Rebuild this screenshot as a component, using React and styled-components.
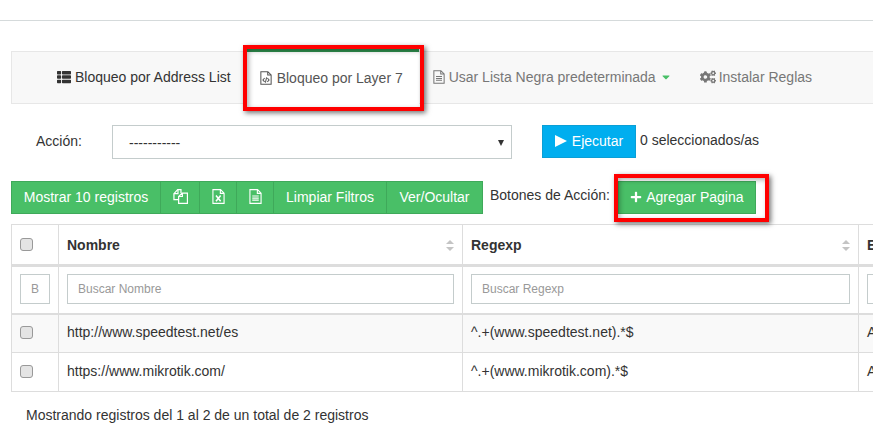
import React from "react";
import styled, { createGlobalStyle } from "styled-components";
import { FaThList, FaCogs, FaPlus, FaCaretDown } from "react-icons/fa";

const GlobalStyle = createGlobalStyle`
  html, body {
    margin: 0;
    padding: 0;
    background: #fff;
    overflow: hidden;
  }
  body {
    width: 873px;
    height: 433px;
    font-family: "Liberation Sans", Arial, sans-serif;
    font-size: 14px;
    color: #333;
  }
  * { box-sizing: border-box; }
`;

const Page = styled.div`
  width: 873px;
  height: 433px;
  overflow: hidden;
  padding-top: 20px;
`;

const TopRule = styled.div`
  height: 1px;
  background: #d5dadb;
  margin-bottom: 30px;
`;

const Content = styled.div`
  padding-left: 11px;
`;

const Nav = styled.div`
  width: 900px;
  height: 53px;
  display: flex;
  align-items: stretch;
  background: #f8f8f8;
  border: 1px solid #e7e7e7;
  padding-left: 45px;
`;

const Tab = styled.div`
  position: relative;
  display: flex;
  align-items: center;
  gap: ${(p) => p.$iconGap || 4}px;
  padding-bottom: 2px;
  color: ${(p) => p.$color || "#777"};
  margin-right: ${(p) => p.$gap || 0}px;
  & > svg { flex: none; }
`;

const ActiveTab = styled(Tab)`
  width: 173px;
  margin: -3px 14px -1px 15px;
  padding-left: 14px;
  padding-bottom: 0;
  background: #fff;
  border-top: 3px solid #2f8f4e;
  color: #555;
  gap: 5px;
`;

const RedBox = styled.div`
  position: absolute;
  border: 4px solid #f00;
  box-shadow: 2px 2px 5px rgba(0, 0, 0, 0.55), inset 2px 2px 5px rgba(0, 0, 0, 0.3);
  pointer-events: none;
  top: ${(p) => p.$top}px;
  left: ${(p) => p.$left}px;
  width: ${(p) => p.$width}px;
  height: ${(p) => p.$height}px;
`;

const Caret = styled(FaCaretDown)`
  color: #49bf67;
`;

const ActionRow = styled.div`
  display: flex;
  align-items: flex-start;
  margin-top: 21px;
  height: 34px;
`;

const ActionLabel = styled.label`
  width: 101px;
  padding: 8px 0 0 25px;
  color: #333;
`;

const SelectBox = styled.div`
  width: 400px;
  height: 34px;
  border: 1px solid #c4cccc;
  background: #fff;
  display: flex;
  align-items: center;
  justify-content: space-between;
  padding: 2px 7px 0 16px;
  color: #333;
  &::after {
    content: "";
    border-left: 3px solid transparent;
    border-right: 3px solid transparent;
    border-top: 6px solid #333;
  }
`;

const RunButton = styled.button`
  margin-left: 30px;
  width: 94px;
  height: 33px;
  display: flex;
  align-items: center;
  justify-content: center;
  gap: 5px;
  background: #00aeef;
  border: 1px solid #0a9fd6;
  color: #fff;
  font: inherit;
  padding: 0 0 2px;
`;

const Selected = styled.span`
  margin: 7px 0 0 4px;
`;

const ButtonRow = styled.div`
  display: flex;
  align-items: flex-start;
  margin-top: 22px;
  height: 33px;
`;

const ButtonGroup = styled.div`
  display: flex;
`;

const GreenButton = styled.button`
  height: 33px;
  width: ${(p) => p.$width}px;
  margin-left: -1px;
  display: flex;
  align-items: center;
  justify-content: center;
  gap: 4px;
  background: #49bf67;
  border: 1px solid #3fa95a;
  color: #fff;
  font: inherit;
  padding: 0 0 2px;
  &:first-child { margin-left: 0; }
`;

const ActionsLabel = styled.span`
  margin: 6px 8px 0 7px;
  white-space: nowrap;
`;

const AddWrap = styled.div`
  position: relative;
`;

const Table = styled.table`
  table-layout: fixed;
  width: 900px;
  margin-top: 10px;
  border-collapse: collapse;
  border: 1px solid #ddd;
  & td, & th {
    border: 1px solid #ddd;
    padding: 0 8px;
    text-align: left;
    white-space: nowrap;
    overflow: hidden;
  }
`;

const HeadRow = styled.tr`
  height: 41px;
  & > th { border-bottom: 3px solid #ddd; position: relative; }
`;

const FilterRow = styled.tr`
  height: 48px;
  & > td { border-bottom: 2px solid #ddd; }
`;

const DataRow = styled.tr`
  height: 39px;
  background: ${(p) => (p.$odd ? "#f9f9f9" : "#fff")};
  & > td { padding-bottom: 2px; }
`;

const Check = styled.span`
  display: block;
  width: 13px;
  height: 13px;
  border: 1px solid #999;
  border-radius: 3px;
  background: #e4e4e4;
`;

const SortSvg = styled.svg`
  position: absolute;
  right: 8px;
  top: 15px;
  color: #c4c4c4;
`;

const FilterInput = styled.div`
  height: 30px;
  width: ${(p) => p.$width || "100%"};
  border: 1px solid #c4cccc;
  margin-bottom: 1px;
  display: flex;
  align-items: center;
  justify-content: ${(p) => (p.$center ? "center" : "flex-start")};
  padding: ${(p) => (p.$center ? "0" : "0 10px")};
  font-size: 12px;
  color: #999;
  background: #fff;
`;

const Footer = styled.div`
  margin: 15px 0 0 15px;
  color: #333;
`;

// document outline shared by the font-awesome style file icons
const FileIcon = ({ w = 13, h = 15, children }) => (
  <svg width={w} height={h} viewBox="0 0 14 16" fill="none" stroke="currentColor" strokeWidth="1.2">
    <path d="M1 .6h8.2l3.8 3.8v11H1zM9 .6v4h4" />
    {children}
  </svg>
);

const TextLines = () => <path d="M3.5 7.5h7M3.5 9.7h7M3.5 11.9h7" />;

const ExcelMark = () => <path d="M4.3 7l5 6M9.3 7l-5 6" strokeWidth="1.7" />;

const CodeMark = () => <path d="M5.4 8l-2 2.3 2 2.3M8.6 8l2 2.3-2 2.3M7.7 7.3l-1.4 6.2" />;

const FilesIcon = () => (
  <svg width="15" height="15" viewBox="0 0 16 16" fill="none" stroke="currentColor" strokeWidth="1.3">
    <path d="M6 11.4H1V5l4-4.300h3.500v3.600" />
    <path d="M1 5h4.300V.8" />
    <path d="M6 15.300V8l3.700-3.700h5.700v11zM6 8h4V4.300" />
  </svg>
);

const PlayIcon = () => (
  <svg width="12" height="12" viewBox="0 0 12 12" fill="currentColor">
    <polygon points="0,0 12,6 0,12" />
  </svg>
);

const SortIcon = () => (
  <SortSvg width="8" height="11" viewBox="0 0 8 11" fill="currentColor">
    <polygon points="4,0 8,4 0,4" />
    <polygon points="0,7 8,7 4,11" />
  </SortSvg>
);

export default function App() {
  return (
    <Page>
      <GlobalStyle />
      <TopRule />
      <Content>
        <Nav>
          <Tab $color="#333"><FaThList size={14} />Bloqueo por Address List</Tab>
          <ActiveTab>
            <FileIcon w={12} h={14}><CodeMark /></FileIcon>Bloqueo por Layer 7
            <RedBox $top={-7} $left={-3} $width={181} $height={66} />
          </ActiveTab>
          <Tab $gap={28}><FileIcon w={12} h={14}><TextLines /></FileIcon>Usar Lista Negra predeterminada<Caret size={12} /></Tab>
          <Tab $iconGap={3}><FaCogs size={16} />Instalar Reglas</Tab>
        </Nav>
        <ActionRow>
          <ActionLabel>Acción:</ActionLabel>
          <SelectBox>-----------</SelectBox>
          <RunButton><PlayIcon />Ejecutar</RunButton>
          <Selected>0 seleccionados/as</Selected>
        </ActionRow>
        <ButtonRow>
          <ButtonGroup>
            <GreenButton $width={150}>Mostrar 10 registros</GreenButton>
            <GreenButton $width={40}><FilesIcon /></GreenButton>
            <GreenButton $width={38}><FileIcon><ExcelMark /></FileIcon></GreenButton>
            <GreenButton $width={38}><FileIcon><TextLines /></FileIcon></GreenButton>
            <GreenButton $width={114}>Limpiar Filtros</GreenButton>
            <GreenButton $width={97}>Ver/Ocultar</GreenButton>
          </ButtonGroup>
          <ActionsLabel>Botones de Acción:</ActionsLabel>
          <AddWrap>
            <GreenButton $width={138}><FaPlus size={12} />Agregar Pagina</GreenButton>
            <RedBox $top={-7} $left={-4} $width={155} $height={48} />
          </AddWrap>
        </ButtonRow>
        <Table>
          <colgroup>
            <col style={{ width: 47 }} />
            <col style={{ width: 404 }} />
            <col style={{ width: 396 }} />
            <col />
          </colgroup>
          <thead>
            <HeadRow>
              <th><Check /></th>
              <th>Nombre<SortIcon /></th>
              <th>Regexp<SortIcon /></th>
              <th>Estado</th>
            </HeadRow>
            <FilterRow>
              <td><FilterInput $center $width="30px">B</FilterInput></td>
              <td><FilterInput>Buscar Nombre</FilterInput></td>
              <td><FilterInput>Buscar Regexp</FilterInput></td>
              <td><FilterInput /></td>
            </FilterRow>
          </thead>
          <tbody>
            <DataRow $odd>
              <td><Check /></td>
              <td>http://www.speedtest.net/es</td>
              <td>^.+(www.speedtest.net).*$</td>
              <td>Activo</td>
            </DataRow>
            <DataRow>
              <td><Check /></td>
              <td>https://www.mikrotik.com/</td>
              <td>^.+(www.mikrotik.com).*$</td>
              <td>Activo</td>
            </DataRow>
          </tbody>
        </Table>
        <Footer>Mostrando registros del 1 al 2 de un total de 2 registros</Footer>
      </Content>
    </Page>
  );
}
